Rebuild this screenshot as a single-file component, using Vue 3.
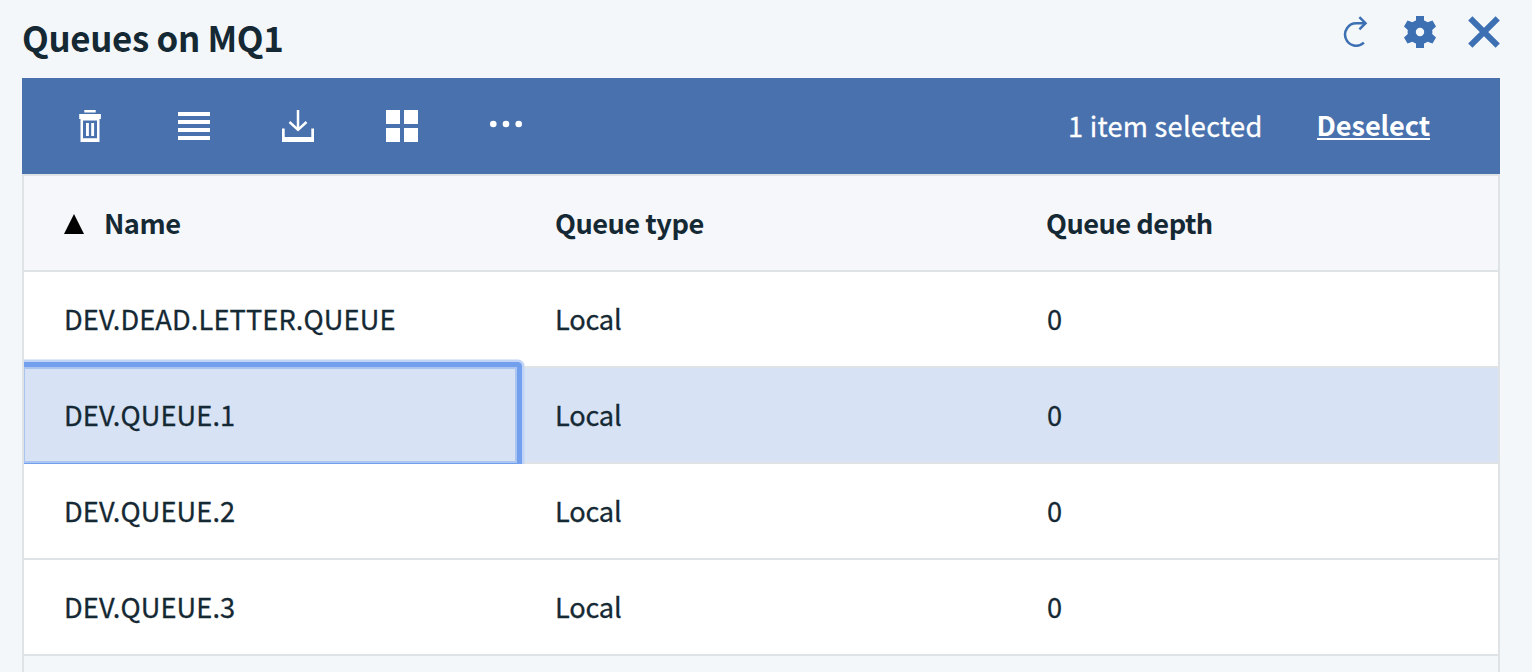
<script setup>
const columns = ['Name', 'Queue type', 'Queue depth']
const queues = [
  { name: 'DEV.DEAD.LETTER.QUEUE', type: 'Local', depth: 0 },
  { name: 'DEV.QUEUE.1', type: 'Local', depth: 0, selected: true },
  { name: 'DEV.QUEUE.2', type: 'Local', depth: 0 },
  { name: 'DEV.QUEUE.3', type: 'Local', depth: 0 },
]
</script>

<template>
  <section class="widget">
    <header class="head">
      <h1 class="title">Queues on MQ1</h1>
      <div class="actions">
        <svg width="32" height="32" viewBox="0 0 32 32" fill="none" stroke="#3d70b2" stroke-width="2.5">
          <path d="M25.5 7.3H16.3A11.2 11.2 0 1 0 23.9 26.7" />
          <path d="M19.4 1.1L25.5 7.2L19.4 13.3" />
        </svg>
        <svg width="32" height="32" viewBox="0 0 32 32" fill="#3d70b2">
          <path fill-rule="evenodd" d="M12 0h8v4.4q2 .7 3.6 1.9L28.5 4.6L32 10.5L28.2 13.9q.4 2.1 0 4.2L32 21.5L28.5 27.4L23.6 25.7q-1.600 1.200-3.600 1.900V32h-8v-4.4q-2-.7-3.600-1.900L3.500 27.400L0 21.500L3.800 18.100q-.4-2.100 0-4.200L0 10.500L3.500 4.600L8.400 6.300q1.600-1.200 3.600-1.900zM16 11.800a4.200 4.200 0 1 0 0 8.400a4.200 4.200 0 1 0 0-8.400z" />
        </svg>
        <svg width="32" height="32" viewBox="0 0 32 32" fill="none" stroke="#3d70b2" stroke-width="6">
          <path d="M2.3 2.3L29.7 29.7M29.7 2.3L2.3 29.7" />
        </svg>
      </div>
    </header>

    <div class="toolbar">
      <div class="tools">
        <svg width="32" height="32" viewBox="0 0 32 32" fill="#fff">
          <path d="M10.3 0h11.4v2.6H10.3zM5.2 4h21.7v5H5.2z" />
          <path fill-rule="evenodd" d="M6.5 8h19v24h-19zM9 10.5v17.7h14V10.5z" />
          <path d="M12 13h2.9v13H12zM17.2 13h2.9v13h-2.9z" />
        </svg>
        <svg width="32" height="32" viewBox="0 0 32 32" fill="#fff">
          <path d="M0 2h32v4H0zM0 10h32v4H0zM0 18h32v4H0zM0 26h32v4H0z" />
        </svg>
        <svg width="32" height="32" viewBox="0 0 32 32">
          <path d="M0 18.5h2.7V27h26.6v-8.5H32V32H0z" fill="#fff" />
          <path d="M16 0v20M7.5 12l8.5 7.8 8.5-7.8" fill="none" stroke="#fff" stroke-width="2.5" />
        </svg>
        <svg width="32" height="32" viewBox="0 0 32 32" fill="#fff">
          <path d="M0 0h14v14H0zM18 0h14v14H18zM0 18h14v14H0zM18 18h14v14H18z" />
        </svg>
        <svg width="32" height="32" viewBox="0 0 32 32" fill="#fff">
          <circle cx="3.3" cy="14" r="3.3" /><circle cx="16" cy="14" r="3.3" /><circle cx="28.7" cy="14" r="3.3" />
        </svg>
      </div>
      <span class="count">1 item selected</span>
      <a class="deselect">Deselect</a>
    </div>

    <div class="table">
      <div class="row header">
        <div v-for="(c, i) in columns" :key="c" class="cell">
          <svg v-if="i === 0" class="sort" width="20" height="20" viewBox="0 0 20 20"><path d="M10 0L20 20H0z" /></svg>
          <span>{{ c }}</span>
        </div>
      </div>
      <div v-for="q in queues" :key="q.name" class="row" :class="{ selected: q.selected }">
        <div class="cell">
          <div v-if="q.selected" class="focus"><div class="ring"></div></div>
          <span class="name">{{ q.name }}</span>
        </div>
        <div class="cell"><span class="type">{{ q.type }}</span></div>
        <div class="cell"><span class="depth">{{ q.depth }}</span></div>
      </div>
    </div>
  </section>
</template>

<style>
html, body { background: #f3f7fa; overflow: hidden; }
</style>

<style scoped>
.widget {
  box-sizing: border-box;
  height: 672px;
  padding: 0 32px 0 22px;
  display: flex;
  flex-direction: column;
  font-family: "Noto Sans CJK SC", "Noto Sans", sans-serif;
  font-size: 27.2px;
  color: #152934;
  overflow: hidden;
}
.head { height: 78px; flex: none; display: flex; justify-content: space-between; }
.title { margin: 0; font-size: 34.8px; line-height: 75px; font-weight: 700; letter-spacing: -0.32px; white-space: nowrap; }
.actions { display: flex; gap: 32px; padding-top: 16px; }
.toolbar {
  height: 96px;
  flex: none;
  box-sizing: border-box;
  padding: 0 70px 0 52px;
  display: flex;
  align-items: center;
  background: #4871ae;
  color: #fff;
}
.tools { display: flex; gap: 72px; margin-right: auto; }
svg { display: block; flex: none; }
.count {
  margin-right: 54px;
  padding-bottom: 3px;
  letter-spacing: 0.25px;
  white-space: nowrap;
  -webkit-text-stroke: 0.3px;
}
.deselect {
  height: 28px;
  line-height: 25px;
  font-weight: 700;
  letter-spacing: -0.1px;
  box-shadow: inset 0 -2px #fff;
}
.table { flex: none; height: 520px; border: 2px solid #dfe3e6; box-sizing: border-box; }
.row {
  height: 96px;
  box-sizing: border-box;
  border-bottom: 2px solid #dfe3e6;
  background: #fff;
  display: grid;
  grid-template-columns: 491px 491px 1fr;
  -webkit-text-stroke: 0.3px;
}
.cell { position: relative; padding: 0 0 2px 40px; display: flex; align-items: center; white-space: nowrap; line-height: 40px; }
.header { background: #f5f7fb; font-weight: 700; letter-spacing: -0.5px; -webkit-text-stroke: 0; }
.sort { margin: 3px 20px 0 0; }
.name { letter-spacing: 0.12px; }
.type { letter-spacing: -0.2px; }
.depth { padding-left: 1px; }
.selected { background: #d7e3f4; }
.focus { position: absolute; left: 0; top: -9px; width: 502px; height: 105px; overflow: hidden; }
.ring {
  position: absolute;
  left: -6px;
  top: 3px;
  width: 504px;
  height: 106px;
  box-sizing: border-box;
  border: 5px solid #739fef;
  border-radius: 4px;
  box-shadow: 0 0 0 2.5px #c2d4f6, inset 0 0 0 2px #abc5f1;
}
</style>
